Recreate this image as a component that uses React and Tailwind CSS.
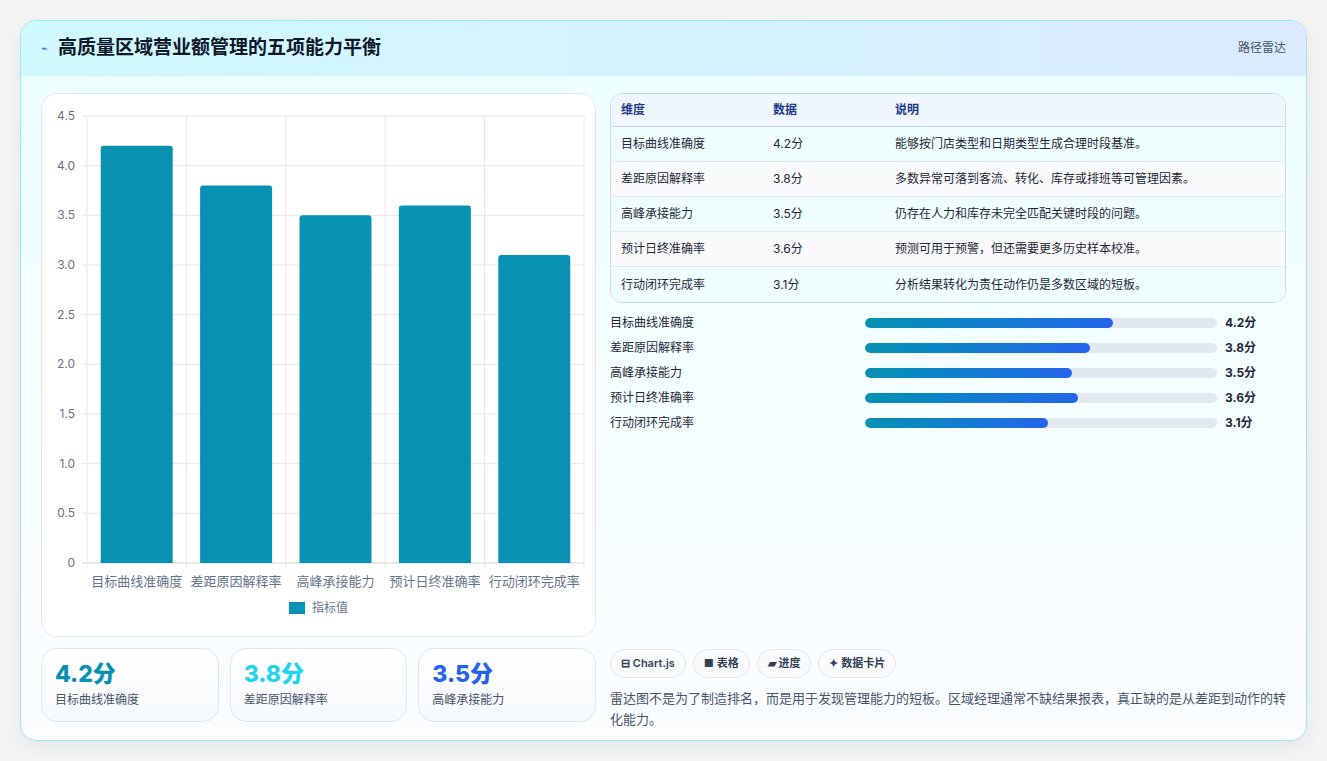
import React from "react";

const data = [
  ["目标曲线准确度", 4.2, "能够按门店类型和日期类型生成合理时段基准。"],
  ["差距原因解释率", 3.8, "多数异常可落到客流、转化、库存或排班等可管理因素。"],
  ["高峰承接能力", 3.5, "仍存在人力和库存未完全匹配关键时段的问题。"],
  ["预计日终准确率", 3.6, "预测可用于预警，但还需要更多历史样本校准。"],
  ["行动闭环完成率", 3.1, "分析结果转化为责任动作仍是多数区域的短板。"],
];

function Chart() {
  const x0 = 45, x1 = 542, y0 = 22, y1 = 469;
  const h = y1 - y0, cw = (x1 - x0) / 5;
  const ticks = [0, 0.5, 1, 1.5, 2, 2.5, 3, 3.5, 4, 4.5];
  return (
    <svg width="555" height="544" className="block">
      {ticks.map((t) => {
        const y = y1 - (t / 4.5) * h;
        return (
          <g key={t}>
            <line x1={x0 - 5} x2={x1} y1={y} y2={y} stroke={t === 0 ? "#cbd5e1" : "#e5e7eb"} />
            <text x={x0 - 12} y={y + 4} textAnchor="end" fontSize="12" fill="#6b7280">{t === 0 ? "0" : t.toFixed(1)}</text>
          </g>
        );
      })}
      {[0, 1, 2, 3, 4, 5].map((i) => (
        <line key={i} x1={x0 + i * cw} x2={x0 + i * cw} y1={y0} y2={y1 + 6} stroke="#e5e7eb" />
      ))}
      {data.map(([n, v], i) => {
        const bh = (v / 4.5) * h;
        const cx = x0 + i * cw + cw / 2;
        return (
          <g key={n}>
            <path d={`M${cx - 36} ${y1} V${y1 - bh + 3} Q${cx - 36} ${y1 - bh} ${cx - 33} ${y1 - bh} H${cx + 33} Q${cx + 36} ${y1 - bh} ${cx + 36} ${y1 - bh + 3} V${y1}Z`} fill="#0891b2" />
            <text x={cx} y={y1 + 23} textAnchor="middle" fontSize="13" fill="#64748b">{n}</text>
          </g>
        );
      })}
      <rect x="247" y="508" width="16" height="12" fill="#0891b2" />
      <text x="270" y="518" fontSize="12" fill="#64748b">指标值</text>
    </svg>
  );
}

export default function App() {
  return (
    <div className="min-h-[761px] bg-[#f3f4f6] p-5 pb-5" style={{ fontFamily: "Inter, 'Noto Sans CJK SC', sans-serif" }}>
      <div className="w-[1287px] h-[721px] rounded-2xl border border-[#a5e4ee] overflow-hidden bg-gradient-to-b from-[#ecfeff] to-[#fbfdff] shadow-[0_6px_20px_rgba(0,0,0,0.06)] flex flex-col">
        <div className="h-[55px] shrink-0 flex items-center justify-between px-5 bg-gradient-to-r from-[#cffafe] to-[#dbeafe] border-b border-[#d8f3f8]">
          <div className="flex items-center gap-2.5">
            <span className="text-[#2563eb] text-[11px]">⌁</span>
            <h1 className="text-[19px] font-bold text-[#0f172a]">高质量区域营业额管理的五项能力平衡</h1>
          </div>
          <span className="text-[12px] text-[#475569]">路径雷达</span>
        </div>
        <div className="flex gap-[14px] px-5 pt-[17px]">
          <div className="w-[555px] shrink-0 flex flex-col gap-[11px]">
            <div className="h-[544px] bg-white rounded-2xl border border-[#e2e8f0]">
              <Chart />
            </div>
            <div className="grid grid-cols-3 gap-[11px]">
              {[["4.2分", "text-[#0891b2]", "目标曲线准确度"], ["3.8分", "text-[#22d3ee]", "差距原因解释率"], ["3.5分", "text-[#2563eb]", "高峰承接能力"]].map(([v, c, l]) => (
                <div key={l} className="h-[74px] rounded-2xl border border-[#dbe7f3] bg-gradient-to-b from-white to-[#f6f9fc] px-[13px] pt-[10px]">
                  <div className={`text-[23px] font-extrabold leading-[30px] ${c}`}>{v}</div>
                  <div className="text-[12px] text-[#475569] mt-[2px]">{l}</div>
                </div>
              ))}
            </div>
          </div>
          <div className="flex-1 flex flex-col">
            <div className="rounded-xl border border-[#cbdbe6] overflow-hidden text-[12px]">
              <div className="h-[33px] flex items-center bg-[#eff6ff] border-b border-[#cbd5e1] text-[#1e3a8a] font-semibold">
                <div className="w-[162px] pl-[10px]">维度</div><div className="w-[122px]">数据</div><div>说明</div>
              </div>
              {data.map(([n, v, d], i) => (
                <div key={n} className={`h-[35px] flex items-center text-[#1f2937] ${i % 2 ? "bg-[#f8fafc]" : "bg-[#f0fdff]"} ${i < 4 ? "border-b border-[#e2e8f0]" : ""}`}>
                  <div className="w-[162px] pl-[10px]">{n}</div><div className="w-[122px]">{v}分</div><div>{d}</div>
                </div>
              ))}
            </div>
            <div className="flex flex-col gap-[7px] mt-[11px]">
              {data.map(([n, v]) => (
                <div key={n} className="h-[18px] flex items-center text-[12px]">
                  <div className="w-[255px] text-[#1f2937]">{n}</div>
                  <div className="w-[352px] h-[10px] rounded-full bg-[#e2e8f0] overflow-hidden">
                    <div className="h-full rounded-full bg-gradient-to-r from-[#0891b2] to-[#2563eb]" style={{ width: `${(v / 5) * 84}%` }} />
                  </div>
                  <div className="ml-2 font-bold text-[#1f2937]">{v}分</div>
                </div>
              ))}
            </div>
            <div className="flex-1" />
            <div className="flex gap-[7px] mt-[auto] pt-0" style={{ marginTop: 217 }}>
              {["⊟ Chart.js", "■ 表格", "▰ 进度", "✦ 数据卡片"].map((t) => (
                <span key={t} className="h-[29px] px-[10px] flex items-center rounded-full border border-[#e5e7eb] bg-[#f8fafc] text-[11px] font-semibold text-[#334155]">{t}</span>
              ))}
            </div>
            <p className="mt-[10px] text-[13px] leading-[21px] text-[#475569]">雷达图不是为了制造排名，而是用于发现管理能力的短板。区域经理通常不缺结果报表，真正缺的是从差距到动作的转化能力。</p>
          </div>
        </div>
      </div>
    </div>
  );
}
